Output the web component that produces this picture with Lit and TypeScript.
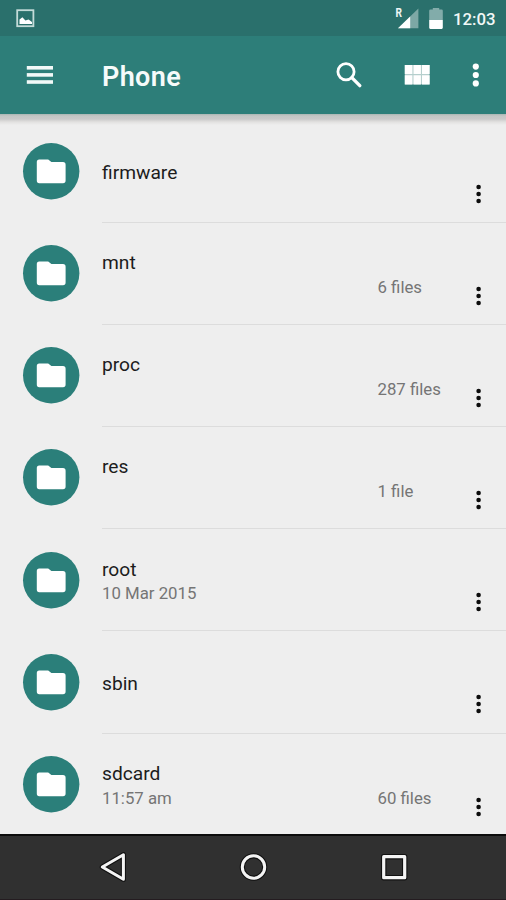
import { LitElement, html, css, svg, nothing } from "lit";
import { customElement, property } from "lit/decorators.js";

interface Entry {
  name: string;
  date?: string;
  count?: string;
}

const entries: Entry[] = [
  { name: "firmware" },
  { name: "mnt", count: "6 files" },
  { name: "proc", count: "287 files" },
  { name: "res", count: "1 file" },
  { name: "root", date: "10 Mar 2015" },
  { name: "sbin" },
  { name: "sdcard", date: "11:57 am", count: "60 files" },
];

@customElement("file-row")
export class FileRow extends LitElement {
  @property({ attribute: false }) entry!: Entry;

  static styles = css`
    :host {
      display: grid;
      grid-template-columns: 56px 404px;
      column-gap: 23px;
      height: 102.2px;
      padding-left: 23px;
      box-sizing: border-box;
    }
    .avatar {
      margin-top: 22.4px;
      width: 56px;
      height: 56px;
      display: block;
      overflow: visible;
    }
    .body {
      display: grid;
      grid-template-columns: 275px 89px 40px;
      border-bottom: 1.6px solid #dcdcdc;
      box-sizing: border-box;
      height: 102.2px;
      white-space: nowrap;
    }
    .texts {
      display: flex;
      flex-direction: column;
      padding-top: 27.4px;
    }
    .texts.single {
      padding-top: 39.1px;
    }
    .name {
      font-size: 19.2px;
      line-height: 26px;
      color: #1c1c1c;
    }
    .meta {
      font-size: 16.8px;
      line-height: 24px;
      color: #757575;
    }
    .texts .meta {
      margin-top: -1.4px;
    }
    .count {
      padding-top: 52px;
      padding-left: 0.5px;
    }
    .more {
      margin-top: 61px;
      width: 24px;
      height: 24px;
    }
    :host([last]) .body {
      border-bottom-color: transparent;
    }
  `;

  render() {
    const e = this.entry;
    const single = !e.date && !e.count;
    return html`
      <svg class="avatar" viewBox="0 0 56 56">
        <circle cx="28.2" cy="28.2" r="28.2" fill="#2b7f7a" />
        <path
          d="M16.2 16.5H25.2L28.4 19.1H40Q42.6 19.1 42.6 21.7V37.6Q42.6 40.2 40 40.2H16.2Q13.8 40.2 13.8 37.6V19.1Q13.8 16.5 16.2 16.5Z"
          fill="#fff"
        />
      </svg>
      <div class="body">
        <div class="texts ${single ? "single" : ""}">
          <span class="name">${e.name}</span>
          ${e.date ? html`<span class="meta">${e.date}</span>` : nothing}
        </div>
        <span class="meta count">${e.count ?? nothing}</span>
        <svg class="more" viewBox="0 0 24 24" fill="#0c0c0c">
          ${[5, 12, 19].map((y) => svg`<circle cx="12.6" cy=${y} r="2.3" />`)}
        </svg>
      </div>
    `;
  }
}

@customElement("app-root")
export class AppRoot extends LitElement {
  static styles = css`
    :host {
      display: flex;
      flex-direction: column;
      width: 506px;
      height: 900px;
      overflow: hidden;
      background: #eee;
      font-family: Roboto, sans-serif;
    }
    svg {
      display: block;
      flex: none;
    }
    .status {
      height: 36px;
      flex: none;
      background: #2a706c;
      display: flex;
      align-items: center;
      color: #f2f8f7;
    }
    .picture {
      margin-left: 16px;
    }
    .signal {
      margin-left: auto;
    }
    .battery {
      margin-left: 5px;
    }
    .clock {
      width: 43px;
      margin: 2px 10px 0 6px;
      font-size: 16.8px;
      font-weight: 500;
      line-height: 20px;
      white-space: nowrap;
    }
    .toolbar {
      height: 78px;
      flex: none;
      background: #2d7e79;
      display: flex;
      align-items: center;
      color: #fff;
    }
    .menu {
      margin-left: 26px;
    }
    .title {
      margin-left: 48px;
      margin-top: 3px;
      font-size: 27px;
      font-weight: 600;
      line-height: 32px;
      letter-spacing: 0.35px;
      color: #f6fbfa;
    }
    .search {
      margin-left: auto;
    }
    .grid {
      margin-left: 41px;
    }
    .dots {
      margin-left: 38px;
      margin-right: 24px;
    }
    .shade {
      height: 11px;
      flex: none;
      margin-bottom: -4.5px;
      background: linear-gradient(#a9b5b3 0, #c4c6c5 2px, #c9c9c9 5px, #e2e1e0 8px, #eee 11px);
    }
    .list {
      flex: 1;
      min-height: 0;
      overflow: hidden;
    }
    .nav {
      height: 66.5px;
      box-sizing: border-box;
      flex: none;
      background: #303030;
      border-top: 2px solid #0c0c0c;
      border-bottom: 1px solid #241c20;
      display: flex;
      align-items: center;
      justify-content: center;
      gap: 100px;
    }
  `;

  render() {
    return html`
      <div class="status">
        <svg class="picture" width="19" height="19" viewBox="0 0 19 19">
          <rect x="1.2" y="1.2" width="16.2" height="16" fill="none" stroke="#c3dbd8" stroke-width="1.8" />
          <path d="M3.5 15V10.5L6.4 8.2L9.4 11.6L12.6 10.4L16 13V15Z" fill="#fff" />
        </svg>
        <svg class="signal" width="25" height="24" viewBox="0 0 25 24">
          <path d="M23.4 2.6V22.3H3Z" fill="#7da8a5" />
          <path d="M15.2 10.4V22.3H3Z" fill="#fff" />
          <text x="0.4" y="11.4" font-size="12" font-weight="700" textLength="6.5" lengthAdjust="spacingAndGlyphs" fill="#eef6f5">R</text>
        </svg>
        <svg class="battery" width="22" height="24" viewBox="0 0 22 24">
          <path d="M4.2 14V4.8Q4.2 3.5 5.5 3.5H7.8V2H14.2V3.5H16.6Q17.8 3.5 17.8 4.8V14Z" fill="#82acaa" />
          <path d="M4.2 14H17.8V21.8Q17.8 22.9 16.7 22.9H5.3Q4.2 22.9 4.2 21.8Z" fill="#fff" />
        </svg>
        <span class="clock">12:03</span>
      </div>
      <div class="toolbar">
        <svg class="menu" width="28" height="20" viewBox="0 0 28 20" fill="#f2f9f8">
          <rect x="0.8" y="1" width="26.2" height="3.6" />
          <rect x="0.8" y="8.1" width="26.2" height="3.6" />
          <rect x="0.8" y="15.2" width="26.2" height="3.6" />
        </svg>
        <span class="title">Phone</span>
        <svg class="search" width="28" height="28" viewBox="0 0 28 28">
          <circle cx="11" cy="10.8" r="8.1" fill="none" stroke="#fff" stroke-width="2.8" />
          <path d="M16.8 16.6L24.8 24.6" stroke="#fff" stroke-width="3.4" stroke-linecap="round" />
        </svg>
        <svg class="grid" width="26" height="20" viewBox="0 0 26 20">
          <rect x="0.8" y="0" width="24.8" height="19.4" fill="#b5cfcd" />
          <path
            d="M0.8 0H8.4V9H0.8ZM9.5 0H16.9V9H9.5ZM18 0H25.6V9H18ZM0.8 10.2H8.4V19.4H0.8ZM9.5 10.2H16.9V19.4H9.5ZM18 10.2H25.6V19.4H18Z"
            fill="#fff"
          />
        </svg>
        <svg class="dots" width="14" height="26" viewBox="0 0 14 26" fill="#fff">
          <circle cx="7.8" cy="4.6" r="3.1" />
          <circle cx="7.8" cy="13" r="3.1" />
          <circle cx="7.8" cy="21.4" r="3.1" />
        </svg>
      </div>
      <div class="shade"></div>
      <div class="list">
        ${entries.map(
          (e, i) => html`<file-row .entry=${e} ?last=${i === entries.length - 1}></file-row>`,
        )}
      </div>
      <div class="nav">
        <svg width="40" height="40" viewBox="0 0 40 40">
          <path d="M9.3 20L30.4 7.8V32.2Z" fill="none" stroke="#111" stroke-width="5.2" stroke-linejoin="round" />
          <path d="M9.3 20L30.4 7.8V32.2Z" fill="none" stroke="#f4f4f4" stroke-width="3" stroke-linejoin="round" />
        </svg>
        <svg width="40" height="40" viewBox="0 0 40 40" fill="none">
          <circle cx="20.5" cy="20" r="11.2" stroke="#111" stroke-width="5.2" />
          <circle cx="20.5" cy="20" r="11.2" stroke="#f4f4f4" stroke-width="3" />
        </svg>
        <svg width="40" height="40" viewBox="0 0 40 40" fill="none" stroke-linejoin="round">
          <rect x="10.7" y="9.7" width="21" height="21" stroke="#111" stroke-width="5.4" />
          <rect x="10.7" y="9.7" width="21" height="21" stroke="#f4f4f4" stroke-width="3.2" />
        </svg>
      </div>
    `;
  }
}
